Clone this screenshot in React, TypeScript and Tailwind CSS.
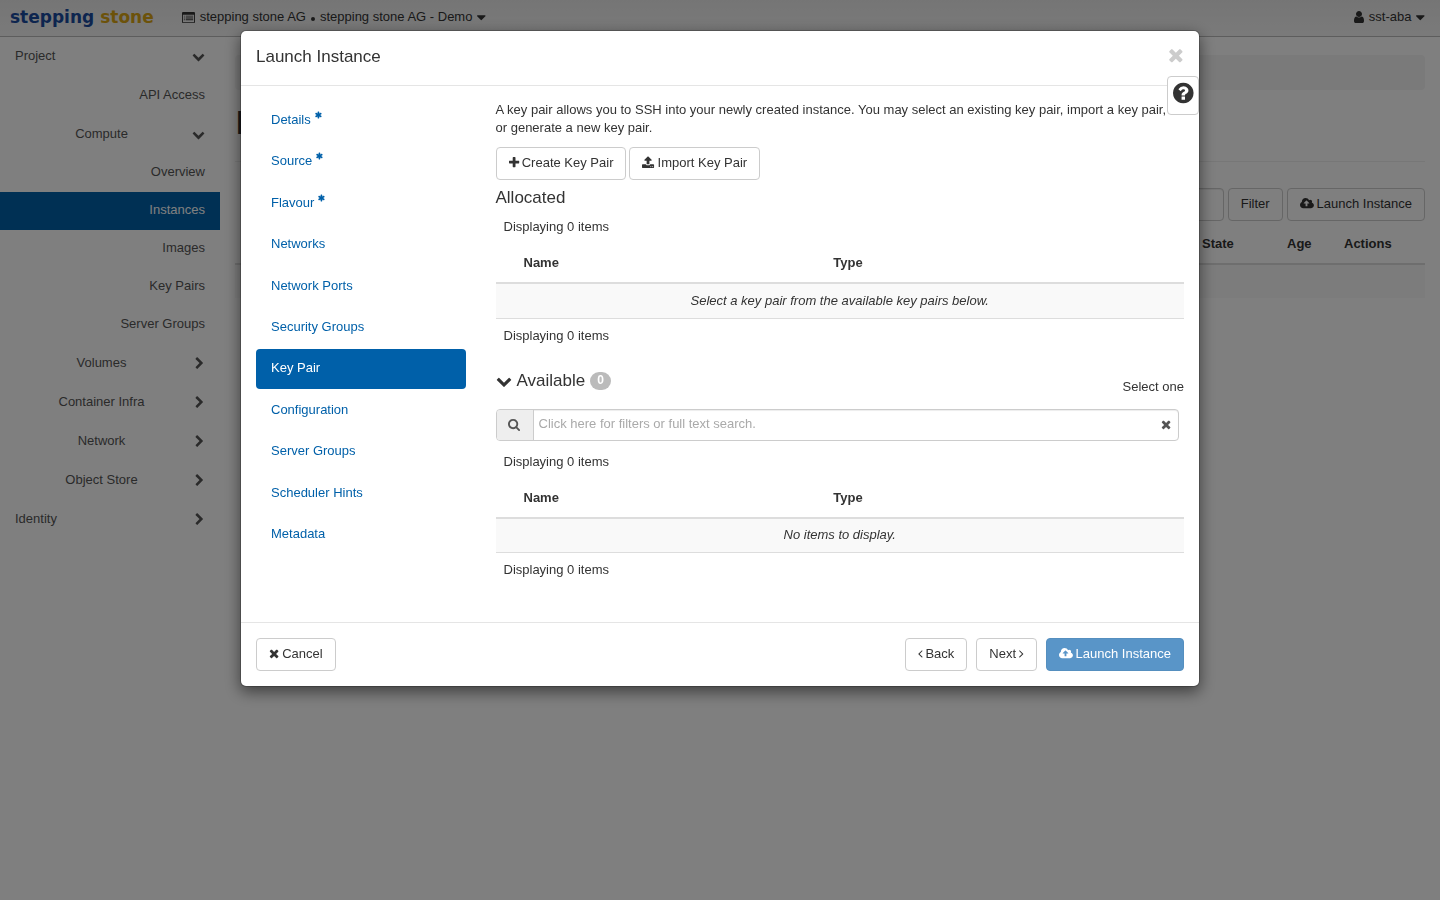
import type { ReactNode } from "react";
import clsx from "clsx";

// Font Awesome 4 outlines: [viewBox x, width, path], 1792 units per em
const ICONS = {
  times: [192, 1408, "M1490 1322q0 40-28 68l-136 136q-28 28-68 28t-68-28l-294-294-294 294q-28 28-68 28t-68-28l-136-136q-28-28-28-68t28-68l294-294-294-294q-28-28-28-68t28-68l136-136q28-28 68-28t68 28l294 294 294-294q28-28 68-28t68 28l136 136q28 28 28 68t-28 68l-294 294 294 294q28 28 28 68z"],
  plus: [192, 1408, "M1600 736v192q0 40-28 68t-68 28h-416v416q0 40-28 68t-68 28h-192q-40 0-68-28t-28-68v-416h-416q-40 0-68-28t-28-68v-192q0-40 28-68t68-28h416v-416q0-40 28-68t68-28h192q40 0 68 28t28 68v416h416q40 0 68 28t28 68z"],
  chevronDown: [0, 1792, "M1683 808l-742 741q-19 19-45 19t-45-19l-742-741q-19-19-19-45.5t19-45.5l166-165q19-19 45-19t45 19l531 531 531-531q19-19 45-19t45 19l166 165q19 19 19 45.5t-19 45.5z"],
  chevronRight: [-140, 1792, "M1363 877l-742 742q-19 19-45 19t-45-19l-166-166q-19-19-19-45t19-45l531-531-531-531q-19-19-19-45t19-45l166-166q19-19 45-19t45 19l742 742q19 19 19 45t-19 45z"],
  angleLeft: [576, 640, "M1203 544q0 13-10 23l-393 393 393 393q10 10 10 23t-10 23l-50 50q-10 10-23 10t-23-10l-466-466q-10-10-10-23t10-23l466-466q10-10 23-10t23 10l50 50q10 10 10 23z"],
  angleRight: [576, 640, "M1171 960q0 13-10 23l-466 466q-10 10-23 10t-23-10l-50-50q-10-10-10-23t10-23l393-393-393-393q-10-10-10-23t10-23l50-50q10-10 23-10t23 10l466 466q10 10 10 23z"],
  caretDown: [384, 1024, "M1408 704q0 26-19 45l-448 448q-19 19-45 19t-45-19l-448-448q-19-19-19-45t19-45 45-19h896q26 0 45 19t19 45z"],
  upload: [64, 1664, "M1344 1472q0-26-19-45t-45-19-45 19-19 45 19 45 45 19 45-19 19-45zm256 0q0-26-19-45t-45-19-45 19-19 45 19 45 45 19 45-19 19-45zm128-224v320q0 40-28 68t-68 28h-1472q-40 0-68-28t-28-68v-320q0-40 28-68t68-28h427q21 56 70.5 92t110.5 36h256q61 0 110.5-36t70.5-92h427q40 0 68 28t28 68zm-325-648q-17 40-59 40h-256v448q0 26-19 45t-45 19h-256q-26 0-45-19t-19-45v-448h-256q-42 0-59-40-17-39 14-69l448-448q18-19 45-19t45 19l448 448q31 30 14 69z"],
  cloudUpload: [-64, 1920, "M1216 864q0-14-9-23l-352-352q-9-9-23-9t-23 9l-351 351q-10 12-10 24 0 14 9 23t23 9h224v352q0 13 9.5 22.5t22.5 9.5h192q13 0 22.5-9.5t9.5-22.5v-352h224q13 0 22.5-9.5t9.5-22.5zm640 288q0 159-112.5 271.5t-271.5 112.5h-1088q-185 0-316.5-131.5t-131.5-316.5q0-130 70-240t188-165q-2-30-2-43 0-212 150-362t362-150q156 0 285.5 87t188.5 231q71-62 166-62 106 0 181 75t75 181q0 76-41 138 130 31 213.5 135.5t83.5 238.5z"],
  search: [64, 1664, "M1216 832q0-185-131.5-316.5t-316.5-131.5-316.5 131.5-131.5 316.5 131.5 316.5 316.5 131.5 316.5-131.5 131.5-316.5zm512 832q0 52-38 90t-90 38q-54 0-90-38l-343-342q-179 124-399 124-143 0-273.5-55.5t-225-150-150-225-55.5-273.5 55.5-273.5 150-225 225-150 273.5-55.5 273.5 55.5 225 150 150 225 55.5 273.5q0 220-124 399l343 343q37 37 37 90z"],
  question: [128, 1536, "M1024 1376v-192q0-14-9-23t-23-9h-192q-14 0-23 9t-9 23v192q0 14 9 23t23 9h192q14 0 23-9t9-23zm256-672q0-88-55.5-163t-138.5-116-170-41q-243 0-371 213-15 24 8 42l132 100q7 6 19 6 16 0 25-12 53-68 86-92 34-24 86-24 48 0 85.5 26t37.5 59q0 38-20 61t-68 45q-63 28-115.5 86.5t-52.5 125.5v36q0 14 9 23t23 9h192q14 0 23-9t9-23q0-19 21.5-49.5t54.5-49.5q32-18 49-28.5t46-35 44.5-48 28-60.5 12.5-81zm384 192q0 209-103 385.5t-279.5 279.5-385.5 103-385.5-103-279.5-279.5-103-385.5 103-385.5 279.5-279.5 385.5-103 385.5 103 279.5 279.5 103 385.5z"],
  user: [256, 1280, "M1536 1399q0 109-62.5 187t-150.5 78h-854q-88 0-150.5-78t-62.5-187q0-85 8.5-160.5t31.5-152 58.5-131 94-89 134.5-34.5q131 128 313 128t313-128q76 0 134.5 34.5t94 89 58.5 131 31.5 152 8.5 160.5zm-256-887q0 159-112.5 271.5t-271.5 112.5-271.5-112.5-112.5-271.5 112.5-271.5 271.5-112.5 271.5 112.5 112.5 271.5z"],
  asterisk: [128, 1536, "M1546 1050q46 26 59.5 77.5t-12.5 97.5l-64 110q-26 46-77.5 59.5t-97.5-12.5l-266-153v307q0 52-38 90t-90 38h-128q-52 0-90-38t-38-90v-307l-266 153q-46 26-97.5 12.5t-77.5-59.5l-64-110q-26-46-12.5-97.5t59.5-77.5l266-154-266-154q-46-26-59.5-77.5t12.5-97.5l64-110q26-46 77.5-59.5t97.5 12.5l266 153v-307q0-52 38-90t90-38h128q52 0 90 38t38 90v307l266-153q46-26 97.5-12.5t77.5 59.5l64 110q26 46 12.5 97.5t-59.5 77.5l-266 154z"],
  listAlt: [0, 1792, "M160 128h1472q66 0 113 47t47 113v1216q0 66-47 113t-113 47h-1472q-66 0-113-47t-47-113v-1216q0-66 47-113t113-47zM128 512v992q0 32 32 32h1472q32 0 32-32v-992zM256 640h128v128h-128zM512 640h1024v128h-1024zM256 896h128v128h-128zM512 896h1024v128h-1024zM256 1152h128v128h-128zM512 1152h1024v128h-1024z"],
} as const;

type IconName = keyof typeof ICONS;

const Icon = ({ name, className = "h-[13px]" }: { name: IconName; className?: string }) => {
  const [x, width, path] = ICONS[name];
  return (
    <svg
      viewBox={`${x} 0 ${width} 1792`}
      fill="currentColor"
      fillRule={name === "listAlt" ? "evenodd" : "nonzero"}
      aria-hidden="true"
      className={clsx("w-auto shrink-0 overflow-visible", className)}
    >
      <path d={path} />
    </svg>
  );
};

const Button = ({
  children,
  primary = false,
}: {
  children: ReactNode;
  primary?: boolean;
}) => (
  <button
    type="button"
    disabled={primary}
    className={clsx(
      "flex h-[33px] items-center gap-[3px] rounded border px-3 pb-px whitespace-nowrap [&_svg]:mb-[2px]",
      primary
        ? "border-[#558fbf] bg-[#5995c8] text-white"
        : "border-[#ccc] bg-white text-[#333]"
    )}
  >
    {children}
  </button>
);

const computeLinks = ["Overview", "Instances", "Images", "Key Pairs", "Server Groups"];
const closedPanels = ["Volumes", "Container Infra", "Network", "Object Store"];

const steps = [
  { label: "Details", required: true },
  { label: "Source", required: true },
  { label: "Flavour", required: true },
  { label: "Networks" },
  { label: "Network Ports" },
  { label: "Security Groups" },
  { label: "Key Pair" },
  { label: "Configuration" },
  { label: "Server Groups" },
  { label: "Scheduler Hints" },
  { label: "Metadata" },
];

const PanelToggle = ({
  label,
  open = false,
  nested = false,
}: {
  label: string;
  open?: boolean;
  nested?: boolean;
}) => (
  <button type="button" className="flex h-[39px] w-full items-center px-[15px]">
    <span className={clsx("flex-1 pb-[2px]", nested ? "pr-1 text-center" : "text-left")}>
      {label}
    </span>
    <Icon name={open ? "chevronDown" : "chevronRight"} />
  </button>
);

const Sidebar = () => (
  <nav className="w-[220px] shrink-0 text-[#555]">
    <PanelToggle label="Project" open />
    <a href="#api" className="flex h-[39px] items-center justify-end px-[15px] pb-[2px]">
      API Access
    </a>
    <PanelToggle label="Compute" open nested />
    <ul>
      {computeLinks.map((link) => (
        <li key={link}>
          <a
            href="#compute"
            className={clsx(
              "flex h-[38px] items-center justify-end px-[15px] pb-[2px]",
              link === "Instances" && "bg-[#0060a9] text-white"
            )}
          >
            {link}
          </a>
        </li>
      ))}
    </ul>
    {closedPanels.map((label) => (
      <PanelToggle key={label} label={label} nested />
    ))}
    <PanelToggle label="Identity" />
  </nav>
);

const Navbar = () => (
  <header className="flex h-[37px] items-center justify-between border-b border-[#bbb] bg-linear-to-b from-[#ebebeb] to-[#f5f5f5] pr-[15px] pb-[2px] pl-[10px] text-[#333]">
    <div className="flex items-center gap-7">
      <a href="#home" className="font-['DejaVu_Sans'] text-[17px] font-bold">
        <span className="text-[#1b4b9f]">stepping</span>{" "}
        <span className="text-[#d9a514]">stone</span>
      </a>
      <button type="button" className="flex items-center gap-[5px]">
        <Icon name="listAlt" />
        <span>stepping stone AG</span>
        <span className="mt-1 size-1 rounded-full bg-[#333]" />
        <span>stepping stone AG - Demo</span>
        <Icon name="caretDown" className="h-[15px]" />
      </button>
    </div>
    <button type="button" className="flex items-center gap-[5px]">
      <Icon name="user" className="h-[14px]" />
      <span>sst-aba</span>
      <Icon name="caretDown" className="h-[15px]" />
    </button>
  </header>
);

const Instances = () => (
  <main className="min-w-0 flex-1 px-[15px] pt-[18px]">
    <div className="h-[35px] rounded bg-[#f5f5f5]" />
    <div className="border-b border-[#eee] pt-3 pb-[19px]">
      <h1 className="text-[34px] leading-10">Instances</h1>
    </div>
    <div className="flex justify-end gap-1 pt-[26px]">
      <input
        type="text"
        aria-label="Filter"
        className="h-[33px] w-60 rounded border border-[#ccc] bg-white px-3 shadow-[inset_0_1px_1px_rgba(0,0,0,0.075)]"
      />
      <Button>Filter</Button>
      <Button>
        <Icon name="cloudUpload" />
        Launch Instance
      </Button>
    </div>
    <table className="mt-1 w-full table-fixed text-left text-[#333]">
      <thead>
        <tr className="h-[39px] border-b-2 border-[#ddd]">
          <th />
          <th className="w-[85px] px-2">State</th>
          <th className="w-[57px] px-2">Age</th>
          <th className="w-[89px] px-2">Actions</th>
        </tr>
      </thead>
      <tbody>
        <tr className="h-[34px] bg-[#f9f9f9]">
          <td colSpan={4} />
        </tr>
      </tbody>
    </table>
  </main>
);

const KeyPairTable = ({ message }: { message: string }) => (
  <div className="flex flex-col gap-2">
    <p className="px-2">Displaying 0 items</p>
    <table className="w-full table-fixed text-left">
      <thead>
        <tr className="h-[39px] border-b-2 border-[#ddd]">
          <th className="w-5" />
          <th className="w-[45%] px-2">Name</th>
          <th className="px-2">Type</th>
        </tr>
      </thead>
      <tbody>
        <tr className="h-[35px] border-b border-[#ddd] bg-[#f9f9f9]">
          <td colSpan={3} className="text-center italic">
            {message}
          </td>
        </tr>
      </tbody>
    </table>
    <p className="px-2">Displaying 0 items</p>
  </div>
);

const LaunchDialog = () => (
  <div
    role="dialog"
    aria-label="Launch Instance"
    className="relative w-full max-w-[960px] rounded-md border border-black/20 bg-white bg-clip-padding shadow-[0_5px_15px_rgba(0,0,0,0.5)]"
  >
    <div className="flex h-[55px] items-start justify-between border-b border-[#e5e5e5] px-[15px] pt-[14px]">
      <h4 className="text-[17px] leading-6">Launch Instance</h4>
      <button type="button" aria-label="Close" className="text-[#ccc]">
        <Icon name="times" className="h-5" />
      </button>
    </div>

    <button
      type="button"
      aria-label="Help"
      className="absolute top-[45px] right-0 flex h-[39px] w-8 justify-center rounded-sm border border-[#ccc] bg-white pt-1"
    >
      <Icon name="question" className="h-6" />
    </button>

    <div className="flex py-[15px]">
      <nav className="w-1/4 shrink-0 px-[15px]">
        <ul className="flex h-[454px] flex-col justify-between">
          {steps.map(({ label, required }) => (
            <li key={label}>
              <a
                href="#step"
                className={clsx(
                  "flex h-10 items-center gap-1 rounded px-[15px] pb-[2px]",
                  label === "Key Pair" ? "bg-[#0060a9] text-white" : "text-[#0060a9]"
                )}
              >
                {label}
                {required && <Icon name="asterisk" className="mb-[10px] h-2" />}
              </a>
            </li>
          ))}
        </ul>
      </nav>

      <section className="min-w-0 flex-1 px-[15px] pb-7">
        <p className="mb-[10px] pr-4">
          A key pair allows you to SSH into your newly created instance. You may select an
          existing key pair, import a key pair, or generate a new key pair.
        </p>
        <div className="flex gap-[3px]">
          <Button>
            <Icon name="plus" />
            Create Key Pair
          </Button>
          <Button>
            <Icon name="upload" />
            Import Key Pair
          </Button>
        </div>

        <h4 className="mt-2 mb-[10px] text-[17px] leading-5">Allocated</h4>
        <KeyPairTable message="Select a key pair from the available key pairs below." />

        <div className="mt-[26px] mb-[13px] flex items-end justify-between">
          <h4 className="flex items-center gap-[5px] pb-[5px] text-[17px] leading-5">
            <Icon name="chevronDown" className="h-4" />
            Available
            <span className="h-[18px] rounded-full bg-[#bbb] px-[7px] text-xs leading-4 font-bold text-white">
              0
            </span>
          </h4>
          <span>Select one</span>
        </div>
        <div className="mr-[5px] mb-3 flex h-8 overflow-hidden rounded border border-[#ccc] text-[#555] shadow-[inset_0_1px_1px_rgba(0,0,0,0.075)]">
          <span className="flex w-[37px] items-center justify-center border-r border-[#ccc] bg-[#eee]">
            <Icon name="search" />
          </span>
          <input
            type="text"
            aria-label="Filter key pairs"
            placeholder="Click here for filters or full text search."
            className="min-w-0 flex-1 px-[5px] pb-[2px] outline-none placeholder:text-[#aaa]"
          />
          <button type="button" aria-label="Clear filter" className="px-[7px]">
            <Icon name="times" />
          </button>
        </div>
        <KeyPairTable message="No items to display." />
      </section>
    </div>

    <div className="flex items-center gap-[9px] border-t border-[#e5e5e5] p-[15px]">
      <div className="mr-auto">
        <Button>
          <Icon name="times" />
          Cancel
        </Button>
      </div>
      <Button>
        <Icon name="angleLeft" />
        Back
      </Button>
      <Button>
        Next
        <Icon name="angleRight" />
      </Button>
      <Button primary>
        <Icon name="cloudUpload" />
        Launch Instance
      </Button>
    </div>
  </div>
);

const App = () => {
  return (
    <div className="min-h-screen bg-white font-['Liberation_Sans',Arial,sans-serif] text-[13px] leading-[18px] text-[#333]">
      <Navbar />
      <div className="flex">
        <Sidebar />
        <Instances />
      </div>
      <div className="fixed inset-0 flex items-start justify-center overflow-y-auto bg-black/50 pt-[30px]">
        <LaunchDialog />
      </div>
    </div>
  );
};

export default App;
